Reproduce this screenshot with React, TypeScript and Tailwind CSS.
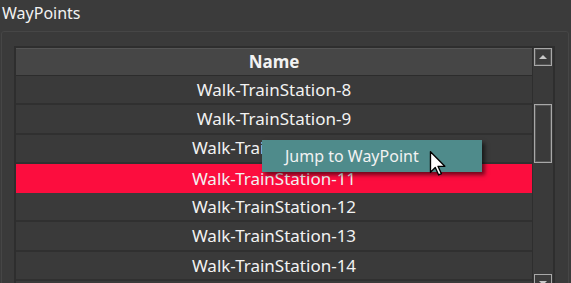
const rows = [
  "Walk-TrainStation-8",
  "Walk-TrainStation-9",
  "Walk-TrainStation-10",
  "Walk-TrainStation-11",
  "Walk-TrainStation-12",
  "Walk-TrainStation-13",
  "Walk-TrainStation-14",
];

function Cursor() {
  return (
    <svg width="18" height="26" viewBox="0 0 12 19" className="absolute left-[429px] top-[151px]">
      <path
        d="M0.5 0.5 L0.5 15.5 L4 12 L6.5 17.5 L8.5 16.6 L6 11.2 L11 11.2 Z"
        fill="#ffffff"
        stroke="#000000"
        strokeWidth="1"
        strokeLinejoin="round"
      />
    </svg>
  );
}

export default function App() {
  return (
    <div
      className="relative h-[283px] w-[571px] overflow-hidden bg-[#3b3b3b] text-[#f2f2f2]"
      style={{ fontFamily: '"Noto Sans", "Open Sans", sans-serif' }}
    >
      <div className="h-[31px] pl-[2px] pt-[3px] text-[16px] leading-[20px]">WayPoints</div>

      <div className="ml-[1px] h-[300px] w-[568px] rounded-[3px] border border-[#464646] bg-[#3a3a3a] pl-[12px] pt-[14px]">
        <div className="flex h-[280px] w-[541px] border-2 border-[#2e2e2e]">
          <div className="flex w-[517px] flex-col border-r border-[#2e2e2e]">
            <div className="flex h-[28px] shrink-0 items-center justify-center border-t border-[#555555] border-b border-b-[#2c2c2c] bg-[#464646] text-[17px] font-bold">
              Name
            </div>
            {rows.map((r, i) => (
              <div
                key={r}
                className={
                  i === 3
                    ? "flex h-[29.3px] shrink-0 items-center justify-center bg-[#fc0d3e] text-[17px]"
                    : "flex h-[29.3px] shrink-0 items-center justify-center border-b-2 border-[#303030] bg-[#3a3a3a] text-[17px]"
                }
              >
                {r}
              </div>
            ))}
          </div>
          <div className="flex w-[20px] flex-col bg-[#3a3a3a] pl-[1px]">
            <div className="flex h-[18px] w-[18px] items-center justify-center border border-[#a8a8a8] bg-[#3c3c3c] shadow-[inset_0_0_0_1px_#555]">
              <div className="h-0 w-0 border-x-[4px] border-b-[4px] border-x-transparent border-b-[#c8c8c8]" />
            </div>
            <div className="mt-[38px] h-[59px] w-[18px] border border-[#a8a8a8] bg-[#3a3a3a] shadow-[inset_0_0_0_1px_#555]" />
            <div className="mt-[111px] flex h-[18px] w-[18px] items-center justify-center border border-[#a8a8a8] bg-[#3c3c3c]">
              <div className="h-0 w-0 border-x-[4px] border-t-[4px] border-x-transparent border-t-[#c8c8c8]" />
            </div>
          </div>
        </div>
      </div>

      <div className="absolute left-[262px] top-[140px] flex h-[32px] w-[220px] items-center bg-[#4f8b8b] pl-[23px] text-[16px] shadow-[3px_3px_4px_rgba(0,0,0,0.55)]">
        Jump to WayPoint
      </div>
      <Cursor />
    </div>
  );
}
